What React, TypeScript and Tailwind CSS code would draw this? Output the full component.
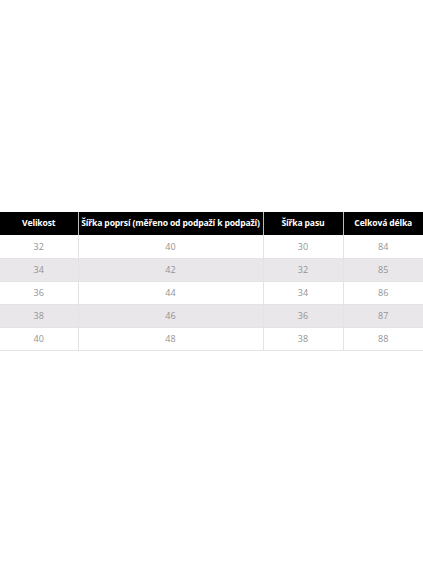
const headers = [
  "Velikost",
  "Šířka poprsí (měřeno od podpaží k podpaží)",
  "Šířka pasu",
  "Celková délka",
];

const rows = [
  ["32", "40", "30", "84"],
  ["34", "42", "32", "85"],
  ["36", "44", "34", "86"],
  ["38", "46", "36", "87"],
  ["40", "48", "38", "88"],
];

const widths = ["w-[78px]", "w-[185px]", "w-[80px]", "w-[80px]"];

const App = () => {
  return (
    <div className="w-[423px] h-[564px] bg-white pt-[212px] font-['Open_Sans',sans-serif]">
      <table className="w-[423px] table-fixed border-collapse">
        <thead>
          <tr className="h-[23px] bg-black">
            {headers.map((h, i) => (
              <th
                key={h}
                className={`${widths[i]} p-0 text-[8.6px] leading-none font-bold tracking-[-0.15px] whitespace-nowrap text-white text-center ${
                  i > 0 ? "border-l border-[#bdbdbd]" : ""
                }`}
              >
                {h}
              </th>
            ))}
          </tr>
        </thead>
        <tbody>
          {rows.map((row, r) => (
            <tr
              key={r}
              className={`h-[23px] border-b border-[#e3e3e3] ${
                r % 2 === 1 ? "bg-[#e9e7ea]" : "bg-white"
              }`}
            >
              {row.map((cell, i) => (
                <td
                  key={i}
                  className={`p-0 text-[9px] leading-none text-[#939393] text-center ${
                    i > 0 ? "border-l border-[#e3e3e3]" : ""
                  }`}
                >
                  {cell}
                </td>
              ))}
            </tr>
          ))}
        </tbody>
      </table>
    </div>
  );
};

export default App;
